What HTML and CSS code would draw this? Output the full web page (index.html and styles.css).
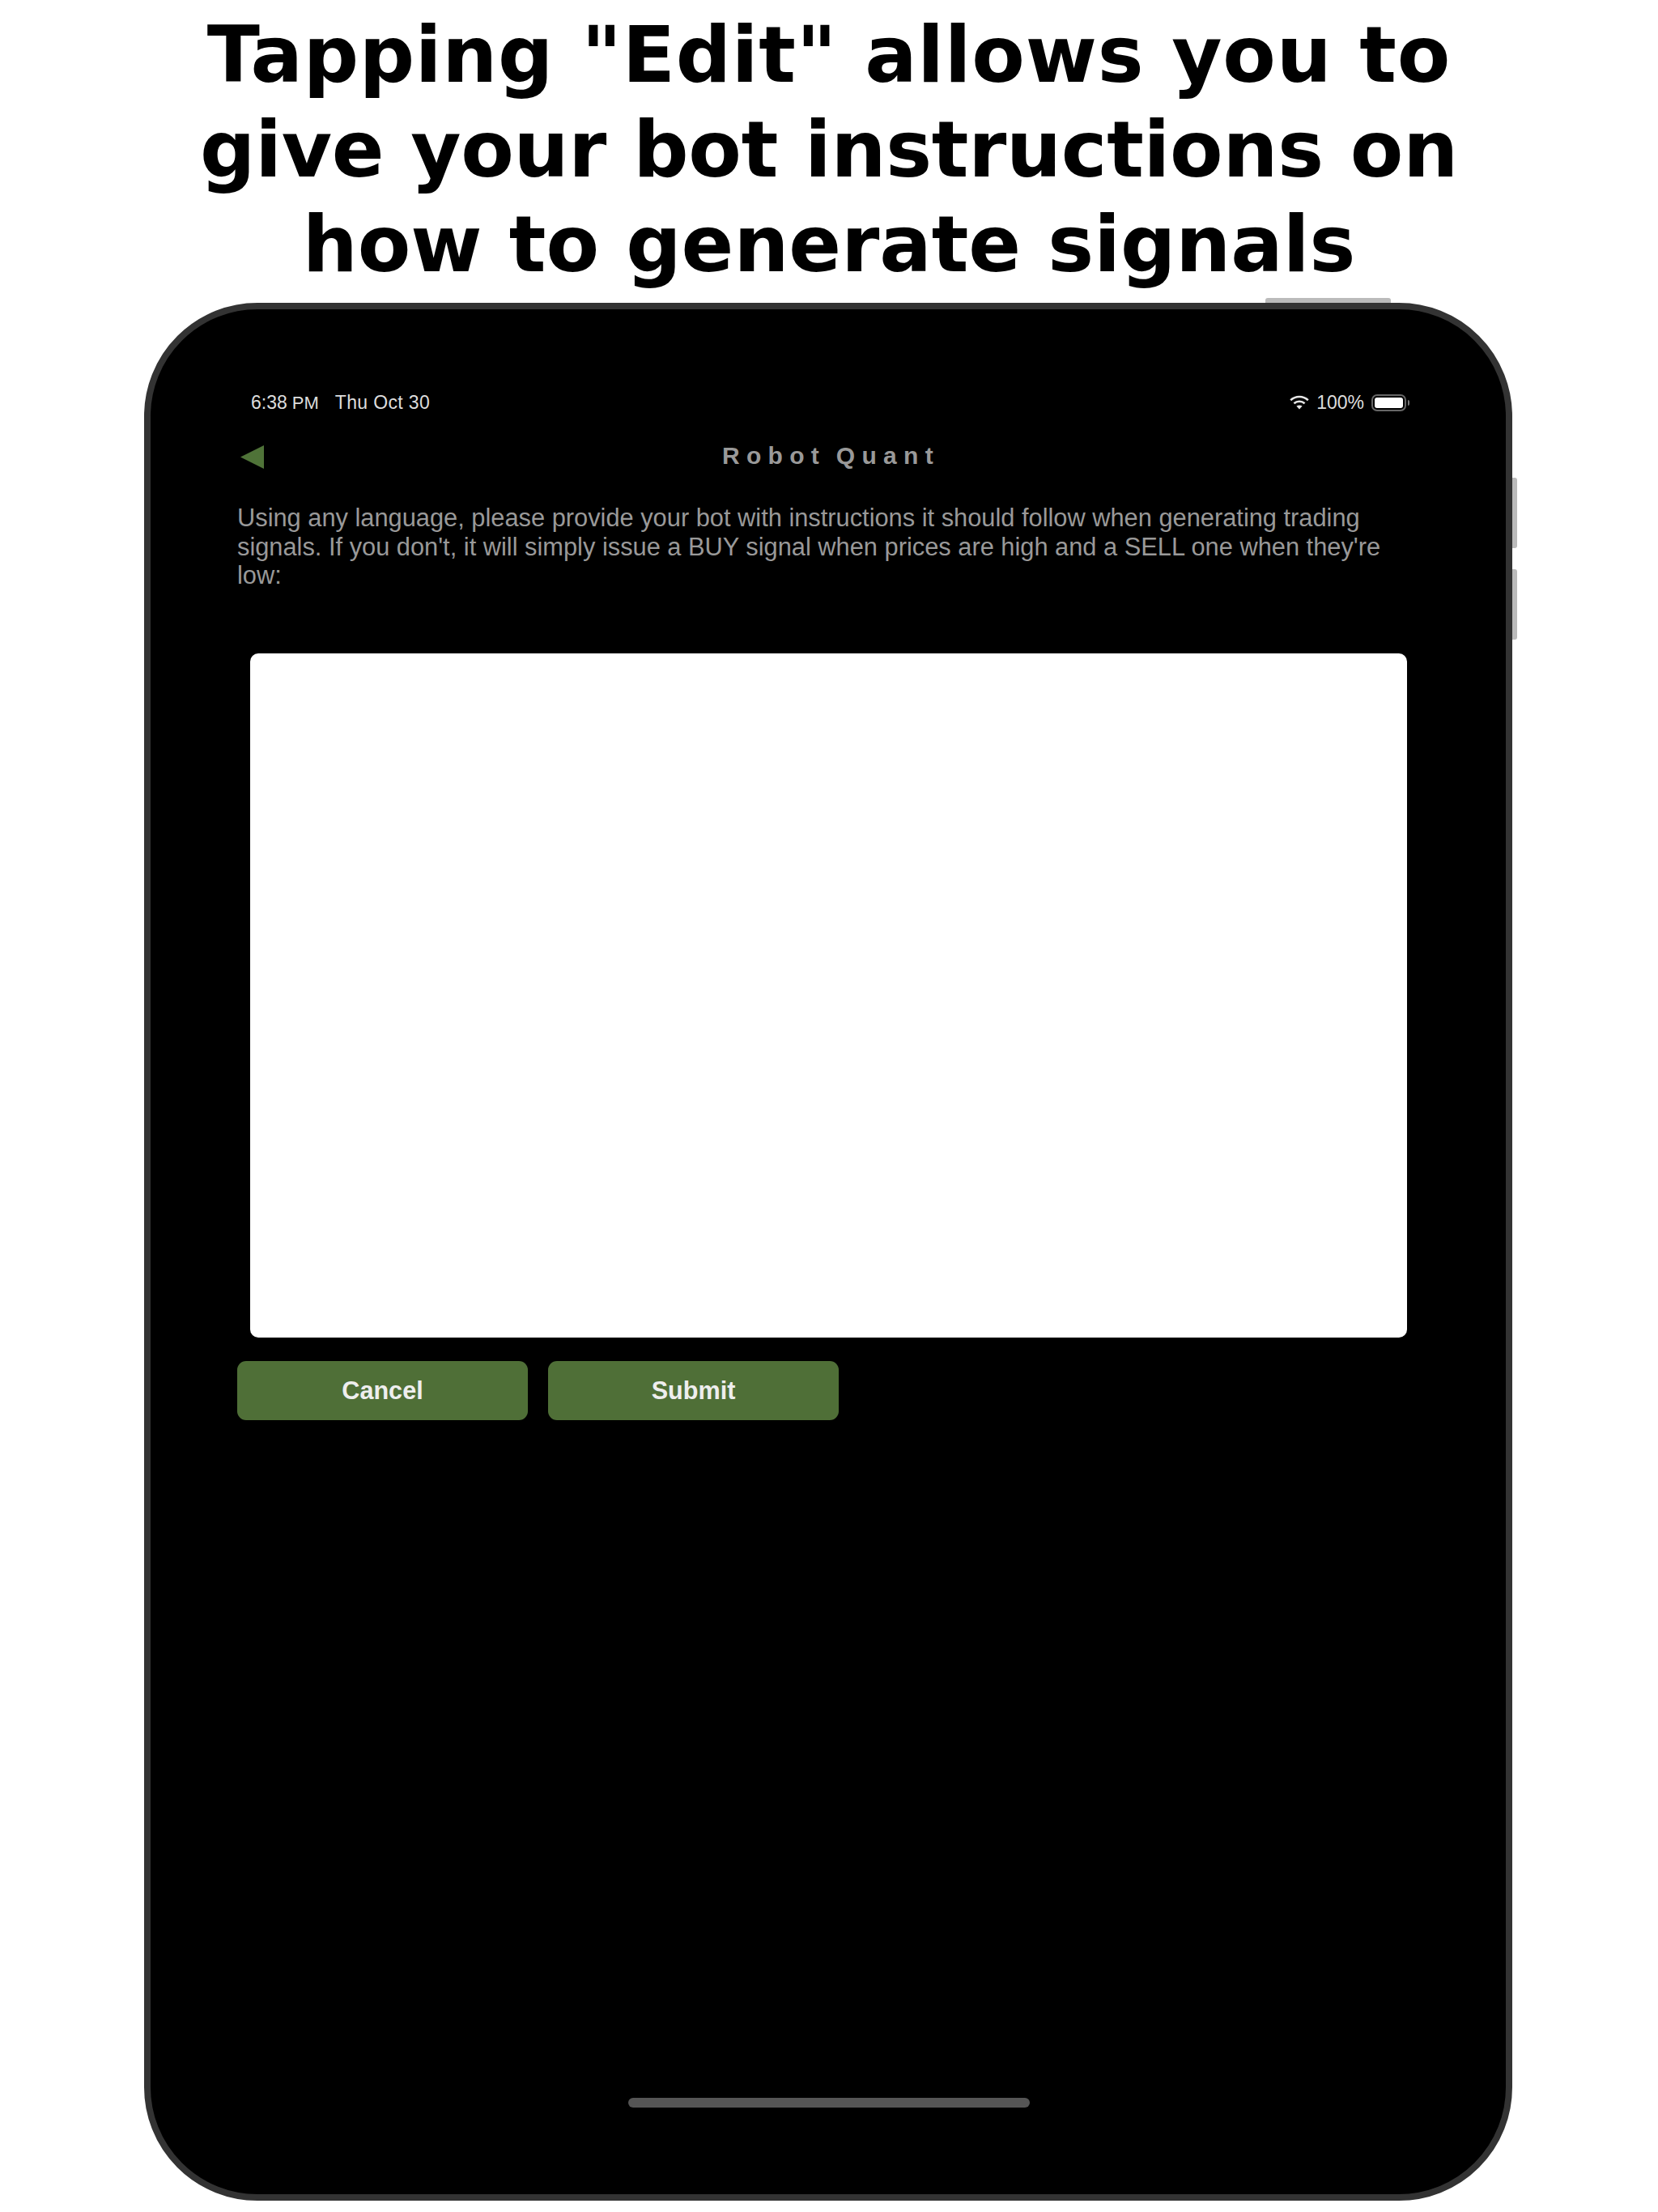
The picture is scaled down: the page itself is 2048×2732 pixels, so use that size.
FILE: index.html
```html
<!DOCTYPE html>
<html lang="en">
<head>
    <meta charset="UTF-8">
    <meta name="viewport" content="width=device-width, initial-scale=1.0">
    <title>Robot Quant</title>
    <link rel="stylesheet" href="styles.css">
</head>
<body>

    <h1 class="caption">
        <span class="caption-wide">Tapping "Edit" allows you to</span>
        <span class="caption-tight">give your bot instructions on</span>
        <span>how to generate signals</span>
    </h1>

    <div class="device">
        <span class="hw hw-top"></span>
        <span class="hw hw-side-a"></span>
        <span class="hw hw-side-b"></span>

        <div class="status-bar">
            <div class="status-left">
                <span class="status-time">6:38<span class="status-pm">PM</span></span>
                <span class="status-date">Thu Oct 30</span>
            </div>
            <div class="status-right">
                <svg class="wifi" width="24" height="18" viewBox="0 0 24 18" fill="none" stroke="#e6e6e6" stroke-width="2.6">
                    <path d="M1.2 6.2C7.3 .6 16.7 .6 22.8 6.2"/>
                    <path d="M5.4 10.2C9.2 6.9 14.8 6.9 18.6 10.2"/>
                    <path d="M12 17.6L8.4 13.6C10.5 12 13.5 12 15.6 13.6Z" fill="#e6e6e6" stroke="none"/>
                </svg>
                <span class="battery-pct">100%</span>
                <span class="battery"><span class="battery-level"></span></span>
                <span class="battery-nub"></span>
            </div>
        </div>

        <div class="nav">
            <svg class="back" width="29" height="29" viewBox="0 0 29 29"><path d="M0 14.5L29 0V29Z" fill="#4f7338"/></svg>
            <div class="nav-title">Robot Quant</div>
        </div>

        <p class="intro">Using any language, please provide your bot with instructions it should follow when generating trading signals. If you don't, it will simply issue a BUY signal when prices are high and a SELL one when they're low:</p>

        <textarea class="instructions"></textarea>

        <div class="actions">
            <button class="btn" type="button">Cancel</button>
            <button class="btn" type="button">Submit</button>
        </div>

        <div class="home-bar"></div>
    </div>

</body>
</html>
```

FILE: styles.css
```css
body {
    margin: 0;
    background: #fff;
    font-family: "Liberation Sans", Arial, sans-serif;
}
.caption {
    margin: 0;
    height: 374px;
    padding-top: 10px;
    box-sizing: border-box;
    text-align: center;
    font-family: "DejaVu Sans", sans-serif;
    font-size: 95.5px;
    font-weight: 700;
    line-height: 117px;
    color: #000;
}
.caption span {
    display: block;
}
.caption .caption-wide {
    letter-spacing: .75px;
}
.caption .caption-tight {
    letter-spacing: -.25px;
}
.device {
    position: relative;
    box-sizing: border-box;
    width: 1690px;
    height: 2344px;
    margin-left: 178px;
    padding: 100px 122px 107px 107px;
    display: flex;
    flex-direction: column;
    border: 8px solid #333;
    border-radius: 140px;
    background: #000;
}
.hw {
    position: absolute;
    background: #bbb;
}
.hw-top {
    top: -14px;
    left: 1377px;
    width: 155px;
    height: 6px;
    border-radius: 3px 3px 0 0;
}
.hw-side-a, .hw-side-b {
    right: -14px;
    width: 6px;
    border-radius: 0 3px 3px 0;
}
.hw-side-a {
    top: 208px;
    height: 87px;
}
.hw-side-b {
    top: 321px;
    height: 87px;
}
.status-bar {
    height: 30px;
    margin-left: 17px;
    display: flex;
    justify-content: space-between;
    align-items: center;
    font-size: 23px;
    color: #ddd;
}
.status-left {
    display: flex;
    gap: 20px;
}
.status-pm {
    margin-left: 6px;
    font-size: 22px;
}
.status-date {
    letter-spacing: .35px;
}
.status-right {
    display: flex;
    align-items: center;
}
.wifi {
    margin-right: 9px;
}
.battery-pct {
    margin-right: 9px;
}
.battery {
    box-sizing: border-box;
    width: 43px;
    height: 21px;
    padding: 2px;
    border: 2px solid #666;
    border-radius: 7px;
}
.battery-level {
    display: block;
    height: 100%;
    background: #fff;
    border-radius: 3px;
}
.battery-nub {
    width: 2px;
    height: 7px;
    margin-left: 2px;
    margin-right: -3px;
    background: #777;
    border-radius: 0 2px 2px 0;
}
.nav {
    height: 60px;
    margin-top: 21px;
    display: flex;
    align-items: center;
    position: relative;
}
.back {
    margin-left: 4px;
    margin-top: 2px;
}
.nav-title {
    position: absolute;
    left: 0;
    right: -22px;
    text-align: center;
    font-size: 30px;
    font-weight: 700;
    letter-spacing: 8.3px;
    word-spacing: -4px;
    color: #999;
}
.intro {
    margin: 29px 0 0;
    font-size: 30.8px;
    line-height: 35.5px;
    color: #999;
}
.instructions {
    display: block;
    box-sizing: border-box;
    width: 1429px;
    height: 845px;
    margin: 78.5px 0 0 16px;
    padding: 10px;
    border: none;
    border-radius: 10px;
    background: #fff;
    resize: none;
}
.actions {
    margin-top: 29px;
    display: flex;
    gap: 25px;
}
.btn {
    width: 359px;
    height: 73px;
    padding: 0;
    border: none;
    border-radius: 11px;
    background: #4f6f37;
    color: #eee;
    font-family: inherit;
    font-size: 30.6px;
    font-weight: 700;
}
.home-bar {
    align-self: center;
    width: 496px;
    height: 12px;
    margin-top: auto;
    margin-left: 17px;
    border-radius: 6px;
    background: #555;
}
```
